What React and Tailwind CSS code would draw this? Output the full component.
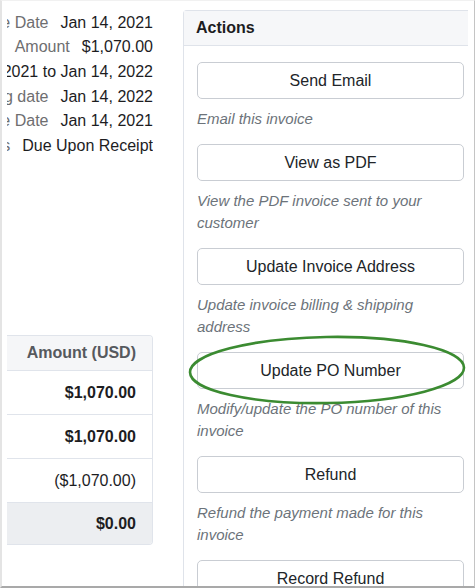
import React from "react";

const details = [
  { label: "Invoice Date", value: "Jan 14, 2021" },
  { label: "Amount", value: "$1,070.00" },
  { label: "Service Period", value: "Jan 14, 2021 to Jan 14, 2022" },
  { label: "Next billing date", value: "Jan 14, 2022" },
  { label: "Due Date", value: "Jan 14, 2021" },
  { label: "Payment Terms", value: "Due Upon Receipt" },
];

const actions = [
  { label: "Send Email", help: "Email this invoice" },
  { label: "View as PDF", help: "View the PDF invoice sent to your customer" },
  { label: "Update Invoice Address", help: "Update invoice billing & shipping address" },
  { label: "Update PO Number", help: "Modify/update the PO number of this invoice" },
  { label: "Refund", help: "Refund the payment made for this invoice" },
  { label: "Record Refund", help: "Record a refund made outside the system" },
];

function ActionItem({ label, help }) {
  return (
    <div>
      <button className="flex h-[37px] w-full items-center justify-center rounded-[5px] border border-[#c9cdd3] bg-white text-[16px] text-[#212529]">
        {label}
      </button>
      <p className="mb-[14px] mt-[9px] text-[15px] italic leading-[22px] text-[#6c737a]">{help}</p>
    </div>
  );
}

export default function App() {
  return (
    <div className="relative h-[588px] w-[475px] overflow-hidden border-b-2 border-l-2 border-r border-t border-b-[#a9a9a9] border-l-[#e4e4e4] border-r-[#c4c4c4] border-t-[#f1f1f1] bg-white font-['Liberation_Sans',Arial,sans-serif]">
      <div className="flex">
        {/* invoice summary, clipped on the left like the page behind it */}
        <div className="ml-[5px] w-[146px] shrink-0 overflow-hidden pt-[9.5px]">
          <div className="flex flex-col items-end">
            {details.map((d) => (
              <div key={d.label} className="flex justify-end gap-[12px] whitespace-nowrap text-[16px] leading-[24.7px]">
                <span className="text-[#6e6e70]">{d.label}</span>
                <span className="text-[#1d1d1f]">{d.value}</span>
              </div>
            ))}
          </div>

          <div className="mt-[176.5px] overflow-hidden rounded-r-[4px] border-y border-r border-[#e0e4eb] text-[16px]">
            <div className="flex h-[34px] items-center justify-end bg-[#f5f6f8] pr-4 font-bold text-[#56595e]">
              Amount (USD)
            </div>
            <div className="flex h-[44px] items-center justify-end border-t border-[#e0e4eb] pr-4 font-bold text-[#1d1d1f]">
              $1,070.00
            </div>
            <div className="flex h-[44px] items-center justify-end border-t border-[#e0e4eb] pr-4 font-bold text-[#1d1d1f]">
              $1,070.00
            </div>
            <div className="flex h-[44px] items-center justify-end border-t border-[#e0e4eb] pr-4 text-[#1d1d1f]">
              ($1,070.00)
            </div>
            <div className="flex h-[42px] items-center justify-end border-t border-[#e0e4eb] bg-[#eceef1] pr-4 font-bold text-[#1d1d1f]">
              $0.00
            </div>
          </div>
        </div>

        {/* actions card */}
        <div className="ml-[30px] mt-[9px] w-[285px] shrink-0 overflow-hidden">
          <div className="w-[294px] rounded-t-[4px] border-l border-t border-[#dfe3ea]">
            <div className="flex h-[35px] items-center border-b border-[#dfe3ea] bg-[#f6f7f9] px-[12px] text-[16px] font-bold text-[#1d1d1f]">
              Actions
            </div>
            <div className="px-[13px] pt-[16px]">
              {actions.map((a) => (
                <ActionItem key={a.label} {...a} />
              ))}
            </div>
          </div>
        </div>
      </div>

      {/* hand-drawn highlight */}
      <svg className="pointer-events-none absolute left-[184px] top-[332px]" width="284" height="76" viewBox="0 0 284 76">
        <ellipse cx="141" cy="37" rx="137" ry="33" fill="none" stroke="#3b8b31" strokeWidth="2.6" transform="rotate(-1 141 37)" />
      </svg>
    </div>
  );
}
